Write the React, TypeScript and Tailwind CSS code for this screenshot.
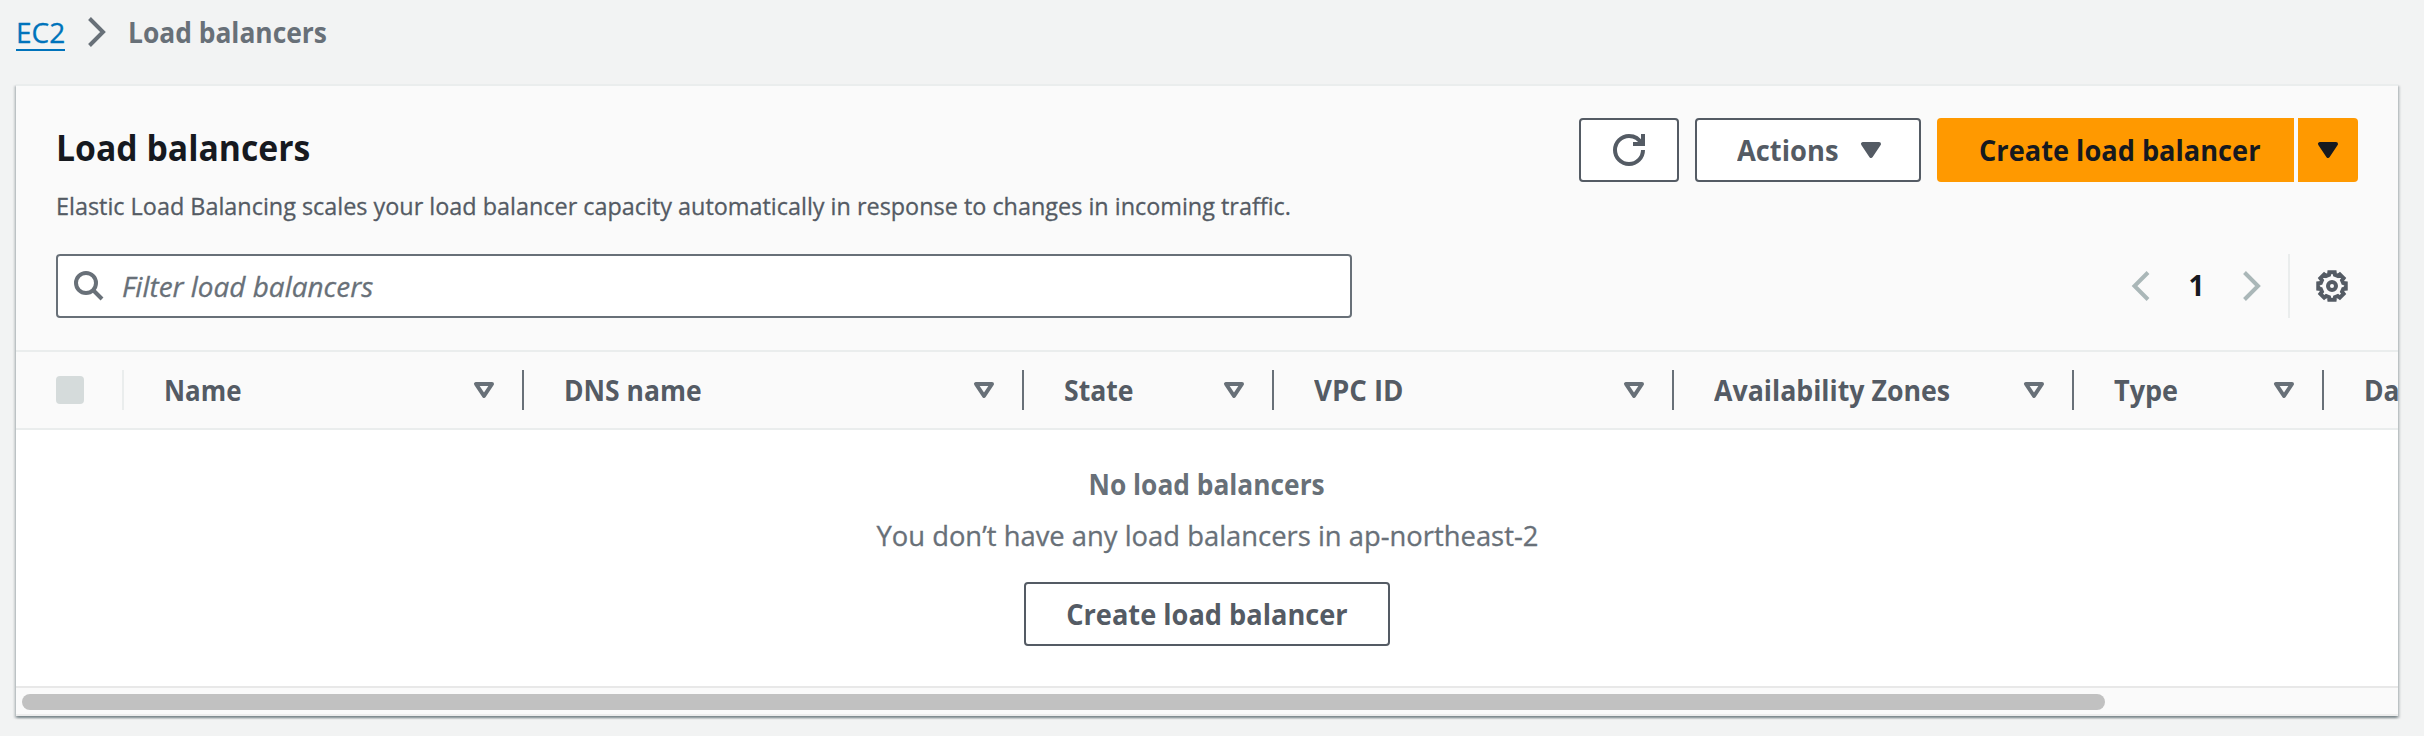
import type { ReactNode } from "react";

const GEAR = Array.from({ length: 8 })
  .flatMap((_, i) =>
    [
      [7, -11],
      [7, 11],
      [5.8, 15],
      [5.8, 30],
    ].map(([r, a]) => {
      const t = ((i * 45 + a) * Math.PI) / 180;
      return `${(8 + r * Math.cos(t)).toFixed(2)} ${(8 + r * Math.sin(t)).toFixed(2)}`;
    }),
  )
  .join("L");

function Icon({ className, children }: { className?: string; children: ReactNode }) {
  return (
    <svg viewBox="0 0 16 16" fill="none" stroke="currentColor" strokeWidth="2" className={`size-8 shrink-0 ${className ?? ""}`}>
      {children}
    </svg>
  );
}

function Caret({ filled, className }: { filled?: boolean; className?: string }) {
  return (
    <Icon className={className}>
      <path d="M4 5h8l-4 6-4-6z" strokeLinejoin="round" fill={filled ? "currentColor" : "none"} />
    </Icon>
  );
}

function Chevron({ className, flip }: { className?: string; flip?: boolean }) {
  return (
    <svg viewBox="0 0 19 30" fill="none" stroke="currentColor" strokeWidth="4" className={`h-[30px] w-[19px] shrink-0 ${className ?? ""}`}>
      <path d={flip ? "M17 1.500L3.500 15L17 28.500" : "M1.500 1.500L15 15L1.500 28.500"} />
    </svg>
  );
}

const columns = [
  { label: "Name", cell: "w-[400px]", text: "scale-x-[0.925]" },
  { label: "DNS name", cell: "w-[500px]", text: "scale-x-[0.945]" },
  { label: "State", cell: "w-[250px]", text: "scale-x-[0.95]" },
  { label: "VPC ID", cell: "w-[400px]", text: "scale-x-[0.985]" },
  { label: "Availability Zones", cell: "w-[400px]", text: "scale-x-[0.955]" },
  { label: "Type", cell: "w-[250px]", text: "scale-x-[0.965]" },
  { label: "Date created", cell: "w-[400px]", text: "scale-x-[0.945]" },
];

export default function App() {
  return (
    <div className="h-[736px] overflow-hidden bg-[#f2f3f3] font-['Open_Sans','Noto_Sans',sans-serif] text-[28px] leading-[44px] text-[#545b64]">
      <nav className="flex h-[84px] items-start pt-[10px] pl-4">
        <a href="#" className="h-[41px] w-[49px] border-b-2 border-[#0073bb] text-[#0073bb] [-webkit-text-stroke:0.3px]">
          EC2
        </a>
        <Chevron className="mt-[7px] ml-[23px] text-[#687078]" />
        <span className="ml-[21px] origin-left scale-x-[0.942] font-bold text-[#687078]">Load balancers</span>
      </nav>

      <main className="mr-[26px] ml-4 flex h-[632px] flex-col border-t-2 border-[#eaeded] bg-white shadow-[0_2px_2px_0_rgba(0,28,36,0.3),2px_2px_2px_0_rgba(0,28,36,0.15),-2px_2px_2px_0_rgba(0,28,36,0.15)]">
        <header className="h-[264px] bg-[#fafafa] px-10 pt-8">
          <div className="flex h-[136px] justify-between">
            <div className="pt-2">
              <h1 className="origin-left scale-x-[0.937] text-[36px] font-bold text-[#16191f]">Load balancers</h1>
              <p className="mt-[18px] origin-left scale-x-[0.975] text-[24px] leading-9 whitespace-nowrap [-webkit-text-stroke:0.3px]">
                Elastic Load Balancing scales your load balancer capacity automatically in response to changes in incoming
                traffic.
              </p>
            </div>
            <div className="flex h-16 gap-4 font-bold">
              <button className="flex w-[100px] items-center justify-center rounded-[4px] border-2 border-[#545b64] bg-white">
                <Icon>
                  <path d="M15 8c0 3.870-3.130 7-7 7s-7-3.130-7-7 3.130-7 7-7c2.790 0 5.200 1.630 6.330 4" />
                  <path d="M10 5h5V0" />
                </Icon>
              </button>
              <button className="flex w-[226px] items-center justify-between rounded-[4px] border-2 border-[#545b64] bg-white pr-8 pl-10">
                <span className="origin-left scale-x-[0.975]">Actions</span>
                <Caret filled />
              </button>
              <div className="flex gap-1 text-[#16191f]">
                <button className="flex w-[357px] items-center rounded-l-[4px] bg-[#ff9900] pl-[42px]">
                  <span className="origin-left scale-x-[0.971] whitespace-nowrap">Create load balancer</span>
                </button>
                <button className="flex w-[60px] items-center justify-center rounded-r-[4px] bg-[#ff9900]">
                  <Caret filled />
                </button>
              </div>
            </div>
          </div>
          <div className="flex h-16 items-center justify-between">
            <div className="flex h-16 w-[1296px] items-center rounded-[4px] border-2 border-[#687078] bg-white pl-4 text-[#687078]">
              <svg viewBox="0 0 30 30" fill="none" stroke="currentColor" strokeWidth="4" className="size-[30px] shrink-0">
                <circle cx="12" cy="12" r="10" />
                <path d="M19 19l9 9" />
              </svg>
              <span className="ml-[18px] origin-left scale-x-[0.997] italic [-webkit-text-stroke:0.3px]">Filter load balancers</span>
            </div>
            <div className="flex items-center">
              <Chevron flip className="text-[#aab7b8]" />
              <span className="w-[93px] pb-0.5 text-center font-bold text-[#16191f]">1</span>
              <Chevron className="text-[#aab7b8]" />
              <div className="ml-[26px] h-16 w-0.5 bg-[#eaeded]" />
              <Icon className="mr-[10px] ml-[26px]">
                <path d={`M${GEAR}Z`} />
                <circle cx="8" cy="8" r="2" />
              </Icon>
            </div>
          </div>
        </header>

        <div className="flex h-20 items-center overflow-hidden border-y-2 border-[#eaeded] bg-[#fafafa] font-bold">
          <div className="flex h-10 w-[108px] shrink-0 items-center border-r-2 border-[#eaeded] pl-10">
            <div className="h-7 w-7 rounded-[4px] bg-[#d5dbdb]" />
          </div>
          {columns.map((c) => (
            <div
              key={c.label}
              className={`flex h-10 shrink-0 items-center justify-between border-r-2 border-[#687078] pr-[22px] pl-10 ${c.cell}`}
            >
              <span className={`origin-left whitespace-nowrap ${c.text}`}>{c.label}</span>
              <Caret className="text-[#687078]" />
            </div>
          ))}
        </div>

        <section className="flex h-[256px] flex-col items-center pt-8 text-[#687078]">
          <p className="scale-x-[0.94] font-bold">No load balancers</p>
          <p className="mt-[7px] scale-x-[0.978] [-webkit-text-stroke:0.3px]">You don’t have any load balancers in ap-northeast-2</p>
          <button className="mt-[25px] flex h-16 w-[366px] items-center justify-center rounded-[4px] border-2 border-[#545b64] bg-white font-bold text-[#545b64]">
            <span className="scale-x-[0.971] whitespace-nowrap">Create load balancer</span>
          </button>
        </section>

        <div className="h-[30px] border-t-2 border-b-2 border-t-[#e8e8e8] border-b-[#ededed] bg-[#fafafa] pt-1.5 pl-1.5">
          <div className="h-4 w-[2083px] rounded-full bg-[#c1c1c1]" />
        </div>
      </main>
    </div>
  );
}
